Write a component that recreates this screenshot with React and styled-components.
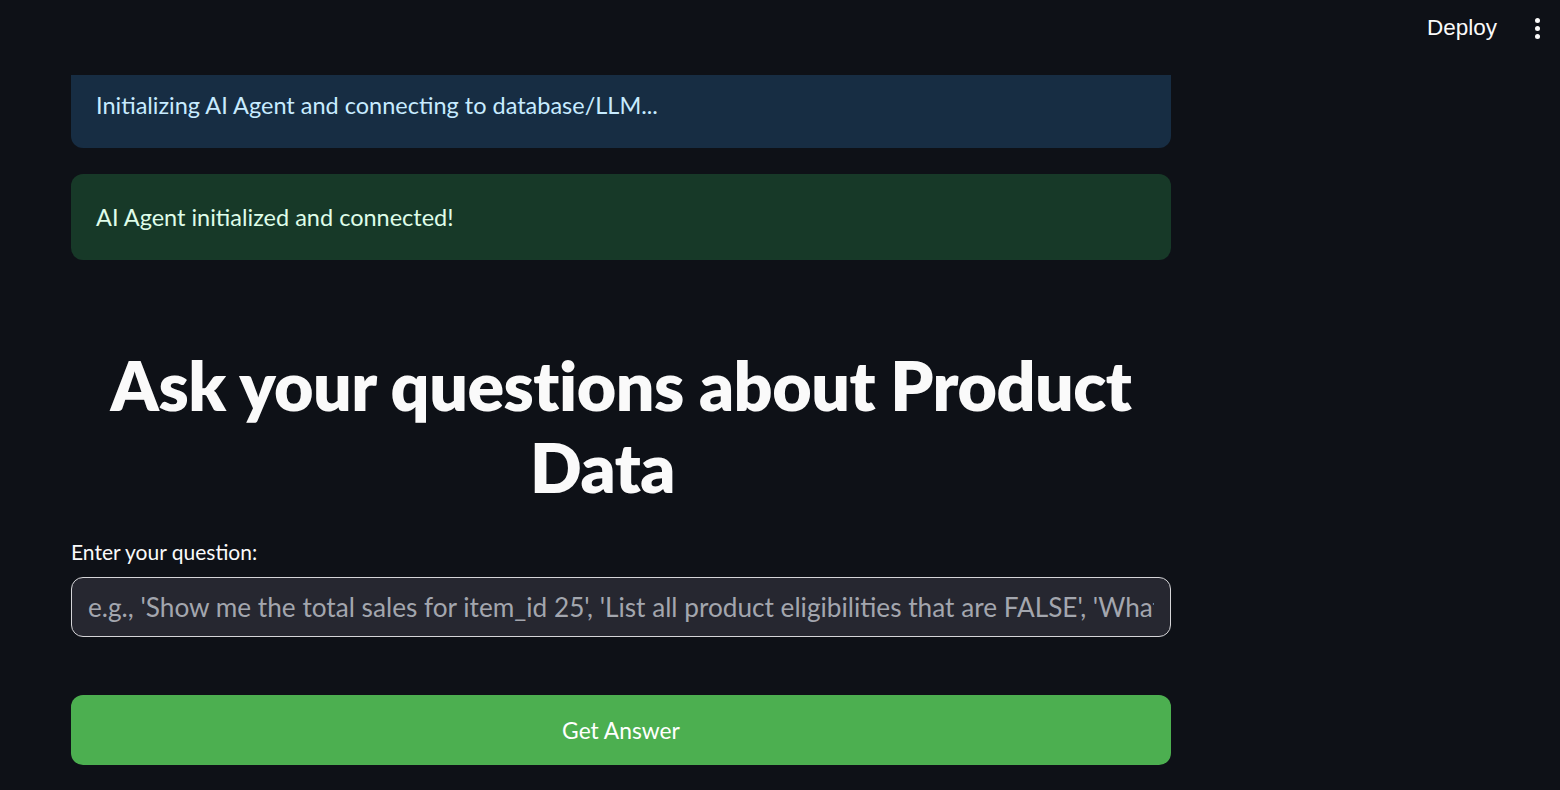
import styled, { createGlobalStyle } from "styled-components";

const GlobalStyle = createGlobalStyle`
  html, body {
    margin: 0;
    padding: 0;
    background: #0e1117;
    color: #fafafa;
    font-family: "Lato", "Noto Sans", sans-serif;
  }
  * {
    box-sizing: border-box;
  }
`;

const Page = styled.div`
  min-height: 790px;
  background: #0e1117;
  position: relative;
  overflow: hidden;
`;

const Header = styled.header`
  position: fixed;
  top: 0;
  left: 0;
  right: 0;
  height: 75px;
  background: #0e1117;
  z-index: 10;
  display: flex;
  align-items: center;
  justify-content: flex-end;
  padding: 0 20px 0 0;
  gap: 38px;
`;

const DeployButton = styled.button`
  background: none;
  border: none;
  color: #fafafa;
  font-family: "Liberation Sans", Arial, sans-serif;
  font-size: 22.5px;
  padding: 0;
  margin-top: -19px;
  cursor: pointer;
`;

const MenuButton = styled.button`
  background: none;
  border: none;
  padding: 0;
  margin-top: -19px;
  display: flex;
  flex-direction: column;
  gap: 3px;
  cursor: pointer;

  span {
    width: 5px;
    height: 5px;
    border-radius: 50%;
    background: #fafafa;
  }
`;

const Main = styled.main`
  width: 1100px;
  margin-left: 71px;
  padding-top: 62px;
  display: flex;
  flex-direction: column;
`;

const Alert = styled.div`
  height: 86px;
  border-radius: 12px;
  padding: 0 25px;
  display: flex;
  align-items: center;
  font-size: 23.5px;
  background: ${(p) => (p.$kind === "success" ? "#173928" : "#172d43")};
  color: ${(p) => (p.$kind === "success" ? "#dffde9" : "#c7ebff")};
  margin-bottom: ${(p) => p.$mb || 0}px;
`;

const Title = styled.h1`
  margin: 84px 0 0;
  text-align: center;
  font-size: 68px;
  font-weight: 800;
  line-height: 82px;
  color: #fafafa;
  letter-spacing: -0.5px;

  .anchor {
    display: inline-block;
    width: 37px;
  }
`;

const Label = styled.label`
  margin-top: 29px;
  font-size: 21px;
  line-height: 30px;
  color: #fafafa;
`;

const Input = styled.input`
  margin-top: 10px;
  height: 60px;
  width: 100%;
  background: #262730;
  border: 1px solid #d5d5d8;
  border-radius: 12px;
  padding: 0 16px;
  font-family: "Lato", "Noto Sans", sans-serif;
  font-size: 26.2px;
  color: #fafafa;
  outline: none;

  &::placeholder {
    color: #a3a6ae;
  }
`;

const Button = styled.button`
  margin-top: 58px;
  height: 70px;
  width: 100%;
  background: #4caf50;
  border: none;
  border-radius: 12px;
  color: #ffffff;
  font-family: "Lato", "Noto Sans", sans-serif;
  font-size: 22.8px;
  cursor: pointer;
`;

export default function App() {
  return (
    <Page>
      <GlobalStyle />
      <Header>
        <DeployButton>Deploy</DeployButton>
        <MenuButton aria-label="Main menu">
          <span />
          <span />
          <span />
        </MenuButton>
      </Header>
      <Main>
        <Alert $mb={26}>Initializing AI Agent and connecting to database/LLM...</Alert>
        <Alert $kind="success">AI Agent initialized and connected!</Alert>
        <Title>
          Ask your questions about Product Data
          <span className="anchor" />
        </Title>
        <Label htmlFor="q">Enter your question:</Label>
        <Input
          id="q"
          placeholder="e.g., 'Show me the total sales for item_id 25', 'List all product eligibilities that are FALSE', 'What is the average price of items?'"
        />
        <Button>Get Answer</Button>
      </Main>
    </Page>
  );
}
